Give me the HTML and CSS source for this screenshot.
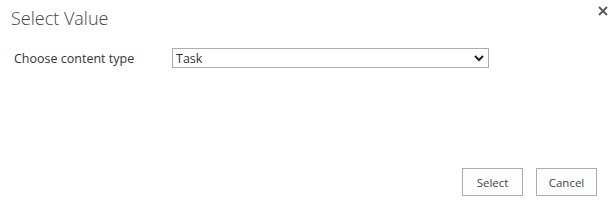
FILE: index.html
```html
<!DOCTYPE html>
<html lang="en">
<head>
  <meta charset="UTF-8" />
  <title>Select Value</title>
  <link rel="stylesheet" href="styles.css">
</head>
<body>
  <div class="dialog">
    <div class="dialog-header">
      <div class="dialog-title">Select Value</div>
      <div class="close-btn" title="Close">
        <svg width="10" height="10" viewBox="0 0 10 10">
          <path d="M1 1 L9 9 M9 1 L1 9" stroke="#5a5a5a" stroke-width="1.9" fill="none" />
        </svg>
      </div>
    </div>

    <div class="form-row">
      <div class="form-label">Choose content type</div>
      <div class="select-box">
        <span class="select-value">Task</span>
        <svg class="chevron" width="10" height="7" viewBox="0 0 10 7">
          <path d="M1 1 L5 5 L9 1" stroke="#222" stroke-width="2" fill="none" />
        </svg>
      </div>
    </div>

    <div class="dialog-footer">
      <div class="btn">Select</div>
      <div class="btn">Cancel</div>
    </div>
  </div>
</body>
</html>
```

FILE: styles.css
```css
* {
  box-sizing: border-box;
}

body {
  margin: 0;
  background: #fff;
  font-family: 'Open Sans', 'Noto Sans', sans-serif;
  color: #444;
}

.dialog {
  height: 202px;
  display: flex;
  flex-direction: column;
}

.dialog-header {
  display: flex;
  justify-content: space-between;
  align-items: flex-start;
  padding: 6px 7px 0 11px;
}

.dialog-title {
  font-size: 18px;
  font-weight: 300;
  color: #444;
  line-height: 24px;
}

.close-btn {
  width: 10px;
  height: 10px;
  margin-top: 0;
  cursor: pointer;
}

.close-btn svg {
  display: block;
}

.form-row {
  display: flex;
  align-items: center;
  margin-top: 18px;
  padding-left: 14px;
}

.form-label {
  width: 158px;
  font-size: 12.5px;
  color: #333;
}

.select-box {
  width: 317px;
  height: 20px;
  border: 1px solid #ababab;
  display: flex;
  align-items: center;
  justify-content: space-between;
  padding: 0 4px 0 3px;
  font-size: 12.5px;
  color: #333;
}

.chevron {
  display: block;
}

.dialog-footer {
  margin-top: auto;
  display: flex;
  justify-content: flex-end;
  gap: 13px;
  padding: 0 18px 6px 0;
}

.btn {
  width: 61px;
  height: 28px;
  border: 1px solid #ababab;
  background: #fdfdfd;
  display: flex;
  align-items: center;
  justify-content: center;
  font-size: 11.5px;
  color: #444;
  cursor: pointer;
}
```
